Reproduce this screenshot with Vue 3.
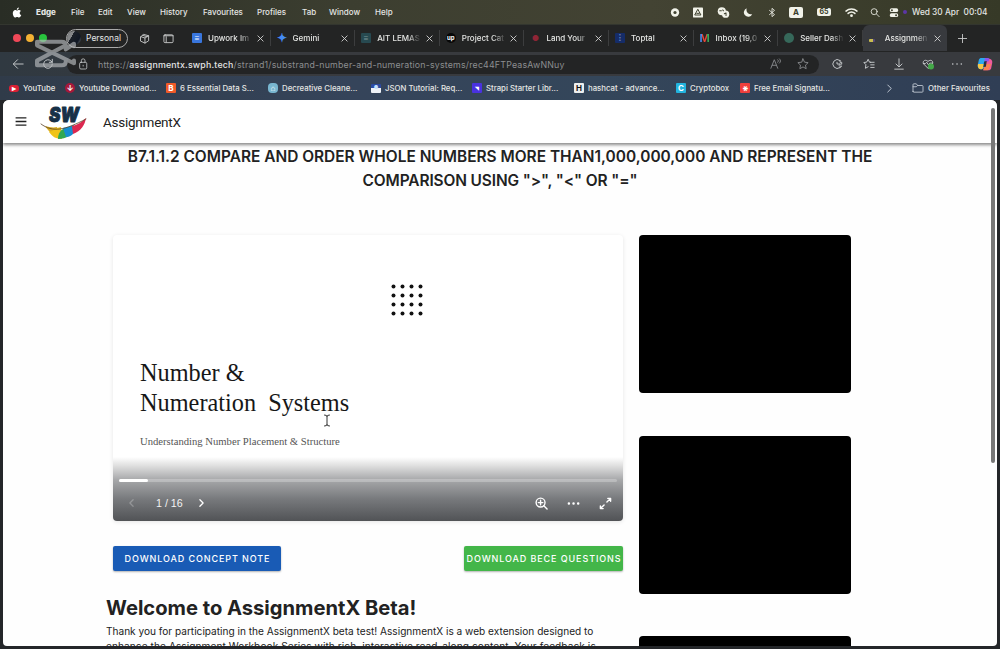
<template>
  <div class="desktop">
    <header class="menubar">
      <svg class="apple" viewBox="0 0 20 24">
        <path d="M14 1c0 3-2 5-4.500 5C9.300 3.500 11.500 1.300 14 1zM10 7.500c1.500 0 2.500-1.200 4.500-1.200 1.700 0 3.200.9 4 2.200-4 2.500-3 7.700.8 9-1 2.800-2.900 5.500-4.900 5.500-1.600 0-2.200-1-4.100-1s-2.600 1-4.100 1C3.500 23 .8 18 .8 13.500.8 9 3.400 6.300 6.200 6.300c1.700 0 2.700 1.200 3.800 1.200z" />
      </svg>
      <nav class="menus">
        <span v-for="item in menus" :key="item">{{ item }}</span>
      </nav>
      <div class="status">
        <svg viewBox="0 0 12 12"><circle cx="6" cy="6" r="5" /><circle class="hole" cx="6" cy="6" r="1.900" /></svg>
        <svg viewBox="0 0 12 12"><rect width="12" height="12" rx="1" /><path class="cut" d="M6 2.500 9.500 9h-7zM4.500 7h3" /></svg>
        <svg class="wide" viewBox="0 0 14 13"><circle cx="5" cy="5" r="4.800" /><circle cx="9.500" cy="8.500" r="4.300" /><path class="cut" d="M2.500 4.500h2M6 3.500l1 1M8 8l2-1v3" /></svg>
        <svg viewBox="0 0 12 12"><path d="M4.500 1A5.200 5.200 0 1 0 11 8 5.400 5.400 0 0 1 4.500 1z" /></svg>
        <svg viewBox="0 0 12 12"><path class="line" d="M3 3.500 9 8.500 6 11V1l3 2.500-6 5" /></svg>
        <b class="lang">A</b>
        <b class="battery">65</b>
        <svg class="wide" viewBox="0 0 14 12"><path class="line thick" d="M1 4.500a9 9 0 0 1 12 0M3.300 7a5.500 5.500 0 0 1 7.400 0" /><circle cx="7" cy="9.500" r="1.500" /></svg>
        <svg viewBox="0 0 12 12"><circle class="line" cx="5" cy="5" r="3.600" /><path class="line" d="m8 8 3 3" /></svg>
        <svg viewBox="0 0 12 12"><rect x="1" y="1" width="10" height="4.500" rx="2" /><rect x="1" y="7" width="10" height="4.500" rx="2" /><circle class="hole" cx="3.500" cy="3.200" r="1.200" /><circle class="hole" cx="8.500" cy="9.200" r="1.200" /></svg>
        <i class="dot"></i>
        <time>Wed 30 Apr&nbsp; 00:04</time>
      </div>
    </header>

    <div class="tabstrip">
      <div class="lights"><i></i><i></i><i></i></div>
      <div class="profile"><i class="avatar"></i>Personal</div>
      <svg class="strip-icon" viewBox="0 0 12 12"><path d="m2 4 3-2.500L10.500 3v5.500L6.500 11 2 9zM2 4l4.500 1.500L10.500 3M6.500 5.500V11M4 2.500 8.500 4" /></svg>
      <svg class="strip-icon actions" viewBox="0 0 12 12"><rect x="1" y="2" width="10" height="8.500" rx="1.200" /><path d="M1 3h10M3.500 4v6" /></svg>
      <div v-for="tab in tabs" :key="tab.title" class="tab" :class="{ active: tab.active }">
        <i class="fav" :class="tab.icon">{{ tab.glyph }}</i>
        <span class="tab-title">{{ tab.title }}</span>
        <svg class="close" viewBox="0 0 8 8"><path d="m1 1 6 6M7 1 1 7" /></svg>
      </div>
      <svg class="new-tab" viewBox="0 0 10 10"><path d="M5 0v10M0 5h10" /></svg>
    </div>

    <div class="toolbar">
      <svg class="tool" viewBox="0 0 14 14"><path d="M13 7H2m4.500-5L1.500 7l5 5" /></svg>
      <svg class="tool refresh" viewBox="0 0 14 14"><path d="M12 7a5 5 0 1 1-1.500-3.500L12 5M12 1.500V5H8.500" /></svg>
      <div class="address">
        <svg class="lock" viewBox="0 0 12 14"><rect x="2" y="5" width="8.500" height="8" rx="1.500" /><path d="M4 5V3a2.200 2.200 0 0 1 4.400 0v2M6.200 8.500v1" /></svg>
        <span class="url">https://<b>assignmentx.swph.tech</b>/strand1/substrand-number-and-numeration-systems/rec44FTPeasAwNNuy</span>
        <svg class="tool dim" viewBox="0 0 14 14"><path d="m1 12 4-10 4 10M2.500 8.500h5M9 2c1 .8 1 2 0 3M11 1c1.700 1.500 1.700 3.500 0 5" /></svg>
        <svg class="tool dim star" viewBox="0 0 14 14"><path d="m7 1 1.800 3.900 4.200.5-3.100 2.900.8 4.200L7 10.400l-3.700 2.100.8-4.200L1 5.400l4.200-.5z" /></svg>
      </div>
      <div class="actions-row">
        <svg class="tool" viewBox="0 0 14 14"><path d="M10.500 2.800a5.200 5.200 0 1 0 0 8.400M10.500 2.800V5H12.500v2.200H10a1.300 1.300 0 0 0 0 2.300h2.500l-2 1.700M7 5v2h3" /></svg>
        <svg class="tool" viewBox="0 0 14 14"><path d="M9 5 7.500 4.800 6 1.500 4.300 4.800 1 5.300l2.400 2.500L2.800 12 6 10.200M8.500 5H13M9 8h4M9 11h4" /></svg>
        <svg class="tool" viewBox="0 0 14 14"><path d="M7 1v9M3.500 7 7 10.500 10.500 7M2 13h10" /></svg>
        <svg class="tool" viewBox="0 0 14 14"><path d="M7 12 2 7C0 4 3.500.8 7 4c3.500-3.200 7 0 5 3zM1.500 6.500H4L5.500 5l2 3L9 6h3.500" /><circle class="ok" cx="10.500" cy="10" r="3.500" /></svg>
        <svg class="tool" viewBox="0 0 14 14"><path class="fat" d="M2 7h.1M7 7h.1M12 7h.1" /></svg>
        <svg class="copilot" viewBox="0 0 18 16">
          <path fill="#2ca8f0" d="M5 1h6L8 11c-.5 2-1.500 3-3 3-4 0-5-3-4-6L2 3c.5-1.500 1.500-2 3-2z" />
          <path fill="#ef5b9d" d="M13 15H7l3-10c.5-2 1.500-3 3-3 4 0 5 3 4 6l-1 5c-.5 1.500-1.500 2-3 2z" />
          <path fill="#8c55ee" d="M9 1h3c1 0 1.500.5 2 1.700L13 5H8z" />
          <path fill="#f5c747" d="M1 8h7l-1 4c-.5 1.400-1 2-3 2C1 14 .5 10 1 8z" />
          <path fill="#fa8050" d="M7 15 9 8h7l-2 5c-.5 1.500-1.500 2-3 2z" />
          <path fill="#283244" d="m8 5 3-.5L10 11l-3 .5z" />
        </svg>
      </div>
    </div>

    <div class="bookmarks">
      <div v-for="mark in bookmarks" :key="mark.title" class="bookmark">
        <i class="fav" :class="mark.icon">{{ mark.glyph }}</i>{{ mark.title }}
      </div>
      <svg class="more" viewBox="0 0 8 10"><path d="m2 1 4 4-4 4" /></svg>
      <div class="bookmark">
        <svg class="folder" viewBox="0 0 14 12"><path d="M1 10V2q0-1 1-1h3l1.500 2H12q1 0 1 1v6q0 1-1 1H2q-1 0-1-1zM1 4.500h4L6.500 3" /></svg>Other Favourites
      </div>
    </div>

    <svg class="watermark" viewBox="0 0 40 32"><path d="M38 9V6.500L30 12M38 23v2.500L2 8V4.500h24q4 0 4 3.500L2 23v4.500h24q4 0 4-3.500" /></svg>

    <main class="page">
      <div class="appbar">
        <svg class="burger" viewBox="0 0 12 10"><path d="M0 1h12M0 5h12M0 9h12" /></svg>
        <svg class="logo" viewBox="0 0 48 38">
          <text x="9" y="18.500" textLength="30" lengthAdjust="spacingAndGlyphs">SW</text>
          <path fill="#dcae22" d="M5 23c4 1 8 2 12 1l3 9c-6 1-10-3-15-10z" />
          <path fill="#f0c419" d="M9 29c5-1 6-4 12-5l1 12c-6 0-9-2-13-7z" />
          <path fill="#31a852" d="M18 36c0-6 3-10 8-11l3 8c-3 2-7 3-11 3z" />
          <path fill="#168ed0" d="M23 25c5-1 8-2 11-3l-1 9c-2 2-4 3-7 3z" />
          <path fill="#dc2850" d="M32 23c5-1 10-4 14-8-1 7-5 13-13 16z" />
          <path class="quill" d="M1 21c12 9 24 6 45-5" />
        </svg>
        <span class="brand">AssignmentX</span>
      </div>

      <h1>B7.1.1.2 COMPARE AND ORDER WHOLE NUMBERS MORE THAN1,000,000,000 AND REPRESENT THE<br /><span>COMPARISON USING "&gt;", "&lt;" OR "="</span></h1>

      <div class="columns">
        <section class="lesson">
          <div class="viewer">
            <svg class="dots" viewBox="0 0 32 32">
              <template v-for="row in 4" :key="row">
                <circle v-for="col in 4" :key="col" :cx="col * 9 - 6.500" :cy="row * 9 - 6.500" r="2" />
              </template>
            </svg>
            <h2>Number &amp;<br />Numeration&nbsp; Systems</h2>
            <p>Understanding Number Placement &amp; Structure</p>
            <div class="controls">
              <div class="progress"><i></i></div>
              <div class="control-row">
                <svg class="prev" viewBox="0 0 6 10"><path d="M5 1 1 5l4 4" /></svg>
                <span>1 / 16</span>
                <svg class="next" viewBox="0 0 6 10"><path d="m1 1 4 4-4 4" /></svg>
                <svg class="ctl" viewBox="0 0 14 14"><circle cx="6" cy="6" r="4.800" /><path d="m9.500 9.500 3.500 3.500M3.500 6h5M6 3.500v5" /></svg>
                <svg class="ctl" viewBox="0 0 14 14"><path class="bold-dots" d="M2 7h.1M7 7h.1M12 7h.1" /></svg>
                <svg class="ctl" viewBox="0 0 14 14"><path d="M8.500 5.500 12.500 1.500M9.500 1.500h3v3M5.500 8.500l-4 4M1.500 9.500v3h3" /></svg>
              </div>
            </div>
          </div>
          <div class="downloads">
            <button class="btn blue">DOWNLOAD CONCEPT NOTE</button>
            <button class="btn green">DOWNLOAD BECE QUESTIONS</button>
          </div>
          <article>
            <h3>Welcome to AssignmentX Beta!</h3>
            <p>Thank you for participating in the AssignmentX beta test! AssignmentX is a web extension designed to<br /><span>enhance the Assignment Workbook Series with rich, interactive read-along content. Your feedback is</span></p>
          </article>
        </section>
        <aside class="videos">
          <div v-for="n in 3" :key="n" class="video"></div>
        </aside>
      </div>
      <i class="scroll-thumb"></i>
      <svg class="caret" viewBox="0 0 6 13"><path d="M.5 1Q3 1 3 2.500 3 1 5.500 1M3 2v9M.5 12Q3 12 3 10.500 3 12 5.500 12" /></svg>
    </main>
  </div>
</template>

<script setup>
const menus = ['Edge', 'File', 'Edit', 'View', 'History', 'Favourites', 'Profiles', 'Tab', 'Window', 'Help'];

const tabs = [
  { title: 'Upwork Im', icon: 'docs', glyph: '≡' },
  { title: 'Gemini', icon: 'gemini', glyph: '✦' },
  { title: 'AIT LEMAS', icon: 'sheet', glyph: '≡' },
  { title: 'Project Cat', icon: 'upwork', glyph: 'up' },
  { title: 'Land Your', icon: 'pin', glyph: '●' },
  { title: 'Toptal', icon: 'toptal', glyph: '⁝' },
  { title: 'Inbox (19,0', icon: 'gmail', glyph: 'M' },
  { title: 'Seller Dash', icon: 'seller', glyph: '' },
  { title: 'Assignmen', icon: 'sw', glyph: '', active: true },
];

const bookmarks = [
  { title: 'YouTube', icon: 'youtube', glyph: '▸' },
  { title: 'Youtube Download...', icon: 'download', glyph: '↓' },
  { title: '6 Essential Data S...', icon: 'blogger', glyph: 'B' },
  { title: 'Decreative Cleane...', icon: 'cloud', glyph: '⌂' },
  { title: 'JSON Tutorial: Req...', icon: 'json', glyph: '●' },
  { title: 'Strapi Starter Libr...', icon: 'strapi', glyph: '◥' },
  { title: 'hashcat - advance...', icon: 'hashcat', glyph: 'H' },
  { title: 'Cryptobox', icon: 'crypto', glyph: 'C' },
  { title: 'Free Email Signatu...', icon: 'hubspot', glyph: '⚹' },
];
</script>

<style>
body {
  margin: 0;
  overflow: hidden;
}
</style>

<style scoped>
* {
  box-sizing: border-box;
}

.desktop {
  position: relative;
  display: flex;
  flex-direction: column;
  width: 1000px;
  height: 649px;
  overflow: hidden;
  background: #242629;
  color: #e5e6e4;
  font-family: Inter, 'Noto Sans', sans-serif;
  font-size: 8px;
  white-space: nowrap;
}

svg {
  display: block;
  flex: none;
  fill: none;
  stroke-linecap: round;
  stroke-linejoin: round;
}

i {
  font-style: normal;
}

/* macOS menu bar */
.menubar {
  display: flex;
  align-items: center;
  height: 24px;
  flex: none;
  padding: 0 12px 0 12px;
  background: linear-gradient(90deg, #292d25, #3c3e30 35%, #434333 65%, #363927);
}

.apple {
  width: 10px;
  height: 11px;
  margin-right: 14px;
  fill: #fff;
}

.menus {
  display: grid;
  grid-template-columns: 35px 27px 29px 33px 43px 54px 45px 27px 46px 20px;
  font-weight: 500;
}

.menus span:first-child {
  font-weight: 800;
}

.status {
  display: grid;
  grid-template-columns: 23px 24px 26px 24px 22px 28px 28px 25px 19px 14px 9px 76px;
  align-items: center;
  margin-left: auto;
}

.status svg {
  width: 10px;
  height: 11px;
  fill: #f1f2e9;
}

.status svg.wide {
  width: 13px;
}

.status .hole {
  fill: #414331;
}

.status .cut {
  fill: none;
  stroke: #414331;
  stroke-width: 1.2;
}

.status .line {
  fill: none;
  stroke: #f1f2e9;
}

.status .thick {
  stroke-width: 1.6;
}

.lang,
.battery {
  width: 14px;
  height: 11px;
  border-radius: 2px;
  background: #f1f2e9;
  color: #393c2a;
  line-height: 11px;
  text-align: center;
}

.battery {
  height: 8px;
  font-size: 7px;
  line-height: 8px;
}

.dot {
  width: 4px;
  height: 4px;
  border-radius: 50%;
  background: #5c36a5;
}

time {
  font-size: 8.3px;
  font-weight: 500;
}

/* tabs */
.tabstrip {
  display: flex;
  align-items: center;
  height: 28px;
  flex: none;
  padding: 0 0 1px 13px;
  border-top: 1px solid #33362f;
  background: #232424;
}

.lights {
  display: flex;
  gap: 5px;
  width: 53px;
}

.lights i {
  width: 8px;
  height: 8px;
  border-radius: 50%;
  background: #ef4858;
}

.lights i:nth-child(2) {
  background: #f4b133;
}

.lights i:nth-child(3) {
  background: #28c43d;
}

.profile {
  display: flex;
  align-items: center;
  gap: 5px;
  width: 62px;
  height: 19px;
  margin-right: 11px;
  border: 1px solid #aaa;
  border-radius: 10px;
  font-size: 8.5px;
}

.avatar {
  width: 14px;
  height: 14px;
  border-radius: 50%;
  background: linear-gradient(120deg, #858789 35%, #1b2028 36%, #111824 75%, #788086);
}

.strip-icon {
  width: 11px;
  height: 11px;
  margin-right: 13px;
  stroke: #c8c9c9;
  stroke-width: 1;
}

.strip-icon.actions {
  margin-right: 12px;
}

.tab {
  display: flex;
  align-items: center;
  width: 84.6px;
  height: 16px;
  flex: none;
  padding: 0 6px;
  border-right: 1px solid #3c3d3e;
}

.tab.active {
  height: 26px;
  border: 0;
  border-radius: 6px 6px 0 0;
  background: #383a3e;
}

.fav {
  display: inline-block;
  width: 10px;
  height: 10px;
  flex: none;
  border-radius: 1px;
  color: #fff;
  font-size: 8px;
  font-weight: 700;
  line-height: 10px;
  text-align: center;
}

.tab-title {
  width: 44px;
  margin-left: 6px;
  font-weight: 500;
  mask-image: linear-gradient(90deg, #000 70%, transparent);
}

.close {
  width: 7px;
  height: 7px;
  margin-left: auto;
  stroke: #d8d8d8;
}

.docs { background: #3976dd; }
.gemini { color: #458bf3; font-size: 12px; }
.sheet { background: #274950; color: #7e9899; }
.upwork { border-radius: 50%; background: #070707; font-size: 6px; }
.pin { color: #8f2536; }
.toptal { background: #152c68; color: #7189c2; }
.gmail { background: linear-gradient(90deg, #4b8df0 25%, #e8453a 25%, #e8453a 75%, #3aa655 75%) text; color: transparent; font-size: 11px; }
.seller { border-radius: 50%; background: #36685a; }
.sw { width: 6px; height: 3px; margin: 4px 4px 0 0; background: linear-gradient(90deg, #c9bd51 60%, #56477b 60%); }

.new-tab {
  width: 9px;
  height: 9px;
  margin-left: 11px;
  stroke: #c8c9c9;
}

/* address row */
.toolbar {
  display: flex;
  align-items: center;
  height: 24px;
  flex: none;
  padding: 0 7px 0 12px;
  background: linear-gradient(90deg, #303941, #383a3e 25%, #383a3e);
}

.tool {
  width: 12px;
  height: 12px;
  stroke: #c7cacc;
  stroke-width: 1.1;
}

.tool.refresh {
  margin: 0 13px 0 18px;
}

.address {
  display: flex;
  align-items: center;
  width: 752px;
  height: 19px;
  padding: 0 10px 0 11px;
  border-radius: 10px;
  background: #232425;
}

.lock {
  width: 10px;
  height: 12px;
  margin-right: 10px;
  stroke: #c1c4c5;
}

.url {
  color: #8c8e90;
  font-size: 8.8px;
  letter-spacing: 0.2px;
}

.url b {
  color: #e5e6e7;
  font-weight: 500;
}

.tool.dim {
  margin-left: auto;
  stroke: #85878a;
}

.tool.star {
  margin-left: 15px;
}

.actions-row {
  display: grid;
  grid-template-columns: 32px 30px 29px 29px 26px 15px;
  align-items: center;
  margin-left: 12px;
}

.fat {
  stroke-width: 1.8;
}

.ok {
  fill: #44a849;
  stroke: none;
}

.copilot {
  width: 16px;
  height: 14px;
}

/* bookmarks */
.bookmarks {
  display: grid;
  grid-template-columns: 56px 101px 102px 103px 101px 102px 102px 64px 146px 26px 80px;
  align-items: center;
  height: 24px;
  flex: none;
  padding-left: 9px;
  background: linear-gradient(90deg, #303b49, #35445a 35%, #34465a 60%, #303e55);
}

.bookmark {
  display: flex;
  align-items: center;
  gap: 4px;
  font-size: 7.8px;
  font-weight: 500;
}

.youtube { height: 7px; border-radius: 3px; background: #db2035; line-height: 7px; }
.download { background: #a6183a; border-radius: 50%; }
.blogger { background: #f15a29; }
.cloud { background: #78b6d0; border-radius: 4px; }
.json { height: 9px; background: linear-gradient(#2c4aa0 40%, #eef1f5 40%); color: #c4e2ff; font-size: 5px; line-height: 7px; }
.strapi { background: #4932df; font-size: 5px; }
.hashcat { background: #eceeed; color: #111; }
.crypto { background: #22b4df; }
.hubspot { background: #ee3f3c; }

.more {
  width: 7px;
  height: 9px;
  stroke: #d2d9e3;
}

.folder {
  width: 12px;
  height: 10px;
  stroke: #c9d0da;
}

.watermark {
  position: absolute;
  top: 37px;
  left: 35px;
  width: 41px;
  height: 33px;
  stroke: #b9bcbf;
  stroke-width: 4;
  opacity: 0.65;
}

/* web page */
.page {
  position: relative;
  width: 994px;
  height: 546px;
  margin-left: 3px;
  overflow: hidden;
  border-radius: 6px 6px 4px 4px;
  background: #fefefe;
  color: #222;
}

.appbar {
  display: flex;
  align-items: center;
  height: 43px;
  padding-left: 12px;
  background: #fff;
  box-shadow: 0 2px 3px rgba(0, 0, 0, 0.45);
}

.burger {
  width: 12px;
  height: 9px;
  stroke: #222;
  stroke-width: 1.4;
  stroke-linecap: butt;
}

.logo {
  width: 48px;
  height: 38px;
  margin: 0 15px 0 13px;
}

.logo text {
  fill: #173047;
  stroke: #173047;
  font-size: 20px;
  font-style: italic;
  font-weight: 900;
}

.quill {
  stroke: #594126;
  stroke-width: 0.8;
}

.brand {
  color: #222;
  font-family: Roboto, sans-serif;
  font-size: 13.5px;
  letter-spacing: -0.25px;
}

h1 {
  margin: 2px 0 0;
  font-size: 15.44px;
  font-weight: 600;
  line-height: 24px;
  text-align: center;
}

h1 span {
  letter-spacing: -0.12px;
}

.columns {
  display: flex;
  gap: 16px;
  margin: 42px 0 0 110px;
}

.lesson {
  width: 510px;
}

.viewer {
  display: flex;
  flex-direction: column;
  height: 286px;
  overflow: hidden;
  border-radius: 4px;
  background: #fff;
  box-shadow: 0 1px 4px rgba(0, 0, 0, 0.1);
  font-family: 'Liberation Serif', serif;
}

.dots {
  width: 32px;
  height: 32px;
  margin: 49px 0 0 278px;
  fill: #111;
}

h2 {
  margin: 42px 0 0 27px;
  color: #171717;
  font-size: 24.3px;
  font-weight: 400;
  line-height: 30px;
}

.viewer p {
  margin: 16px 0 0 27px;
  color: #555;
  font-size: 10.65px;
  line-height: 15px;
}

.controls {
  height: 64px;
  margin-top: auto;
  padding: 22px 6px 0;
  background: linear-gradient(rgba(255, 255, 255, 0), #dedede 14%, #a6a7a9 36%, #77797c 66%, #515356);
  font-family: 'Liberation Sans', sans-serif;
}

.progress {
  height: 3px;
  border-radius: 2px;
  background: rgba(255, 255, 255, 0.25);
}

.progress i {
  display: block;
  width: 29px;
  height: 3px;
  border-radius: 2px;
  background: #fff;
}

.control-row {
  display: grid;
  grid-template-columns: 27px 43px 336px 32px 32px 13px;
  align-items: center;
  height: 42px;
  padding-left: 10px;
  color: #f4f4f4;
  font-size: 10.7px;
}

.prev,
.next {
  width: 5px;
  height: 8px;
  stroke: #fff;
  stroke-width: 1.6;
}

.prev {
  opacity: 0.25;
}

.ctl {
  width: 13px;
  height: 13px;
  stroke: #fff;
  stroke-width: 1.5;
}

.bold-dots {
  stroke-width: 2.6;
}

.downloads {
  display: flex;
  justify-content: space-between;
  margin-top: 25px;
}

.btn {
  height: 25px;
  padding: 0 0 0 1px;
  border: 0;
  border-radius: 2px;
  box-shadow: 0 1px 2px rgba(0, 0, 0, 0.3);
  color: #fff;
  font: 500 9px Inter, sans-serif;
  letter-spacing: 0.9px;
}

.blue {
  width: 168px;
  background: #195bb5;
}

.green {
  width: 159px;
  background: #43b649;
}

article {
  margin: 25px 0 0 -7px;
}

h3 {
  margin: 0;
  font-size: 20.15px;
  font-weight: 700;
  line-height: 24px;
}

article p {
  margin: 4px 0 0;
  font-size: 10.1px;
  line-height: 15px;
}

article p span {
  letter-spacing: 0.08px;
}

.videos {
  display: flex;
  flex-direction: column;
  gap: 42.5px;
}

.video {
  width: 212px;
  height: 158px;
  border-radius: 4px;
  background: #000;
}

.scroll-thumb {
  position: absolute;
  top: 8px;
  right: 2px;
  width: 4px;
  height: 355px;
  border-radius: 2px;
  background: #777;
}

.caret {
  position: absolute;
  top: 314px;
  left: 321px;
  width: 6px;
  height: 13px;
  stroke: #333;
}
</style>
